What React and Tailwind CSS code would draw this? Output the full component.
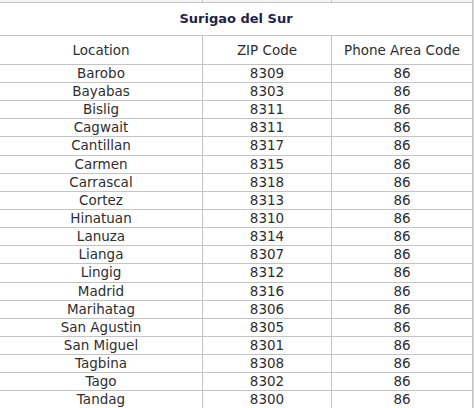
const rows = [
  ["Barobo", "8309", "86"],
  ["Bayabas", "8303", "86"],
  ["Bislig", "8311", "86"],
  ["Cagwait", "8311", "86"],
  ["Cantillan", "8317", "86"],
  ["Carmen", "8315", "86"],
  ["Carrascal", "8318", "86"],
  ["Cortez", "8313", "86"],
  ["Hinatuan", "8310", "86"],
  ["Lanuza", "8314", "86"],
  ["Lianga", "8307", "86"],
  ["Lingig", "8312", "86"],
  ["Madrid", "8316", "86"],
  ["Marihatag", "8306", "86"],
  ["San Agustin", "8305", "86"],
  ["San Miguel", "8301", "86"],
  ["Tagbina", "8308", "86"],
  ["Tago", "8302", "86"],
  ["Tandag", "8300", "86"],
];

const grid = "grid grid-cols-[203px_129px_141px] border-b border-[#c4c4c4]";
const cell = "flex items-center justify-center border-r border-[#c4c4c4]";

export default function App() {
  return (
    <div className="w-[474px] h-[408px] overflow-hidden bg-[#d9d9d9] font-['DejaVu_Sans',Verdana,sans-serif] text-[#2e2e2e] text-[13.5px]">
      <div className="w-[473px] bg-white">
        {/* cut-off row of the previous table */}
        <div className={`${grid} h-[3px] bg-[#f4f4f4]`}>
          <div className={cell} />
          <div className={cell} />
          <div className={cell} />
        </div>

        <div className="h-[33px] flex items-center justify-center border-b border-r border-[#c4c4c4] font-bold text-[13px] text-[#1f1f4a]">
          Surigao del Sur
        </div>

        <div className={`${grid} h-[29px]`}>
          <div className={cell}>Location</div>
          <div className={cell}>ZIP Code</div>
          <div className={cell}>Phone Area Code</div>
        </div>

        {rows.map(([loc, zip, code], i) => (
          <div key={loc} className={`${grid} ${i === 4 || i === 11 ? "h-[19px]" : "h-[18px]"} leading-none`}>
            <div className={cell}>{loc}</div>
            <div className={cell}>{zip}</div>
            <div className={cell}>{code}</div>
          </div>
        ))}
      </div>
    </div>
  );
}
